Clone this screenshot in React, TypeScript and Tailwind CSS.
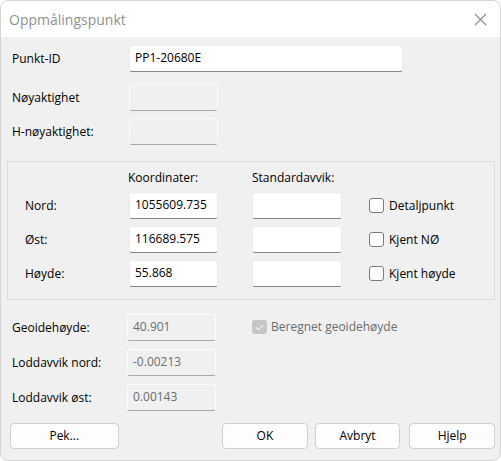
import React from 'react';

const font = { fontFamily: '"Segoe UI", "Open Sans", "Noto Sans", sans-serif' };

function Field({ value = '', width = 'w-[89px]', disabled = false }: { value?: string; width?: string; disabled?: boolean }) {
  return (
    <div
      className={`${width} h-[27px] shrink-0 rounded-[3px] border px-[5px] pt-[3px] text-[12px] leading-[18px] ${
        disabled
          ? 'bg-[#f0f0f0] border-[#fbfbfb] border-b-[#a8a8a8] text-[#6d6d6d]'
          : 'bg-white border-[#ececec] border-b-[#868686] text-black'
      }`}
    >
      {value}
    </div>
  );
}

function Check({ label }: { label: string }) {
  return (
    <div className="flex items-center gap-[5px]">
      <div className="w-[15px] h-[15px] rounded-[3px] border border-[#7a7a7a] bg-white" />
      <span className="text-[12px] text-black">{label}</span>
    </div>
  );
}

function Button({ label, width }: { label: string; width: string }) {
  return (
    <button className={`${width} h-[26px] rounded-[4px] border border-[#d0d0d0] bg-[#fdfdfd] text-[12px] text-black`}>
      {label}
    </button>
  );
}

export default function App() {
  const rows = [
    { label: 'Nord:', value: '1055609.735', check: 'Detaljpunkt' },
    { label: 'Øst:', value: '116689.575', check: 'Kjent NØ' },
    { label: 'Høyde:', value: '55.868', check: 'Kjent høyde' },
  ];
  const lower = [
    { label: 'Geoidehøyde:', value: '40.901' },
    { label: 'Loddavvik nord:', value: '-0.00213' },
    { label: 'Loddavvik øst:', value: '0.00143' },
  ];

  return (
    <div className="w-[501px] h-[461px] bg-white" style={font}>
      <div className="w-full h-full flex flex-col rounded-[8px] overflow-hidden border border-[#d4d4d4] bg-[#f0f0f0]">
        {/* title bar */}
        <div className="h-[36px] shrink-0 bg-white flex items-center justify-between pl-[8px] pr-[12px]">
          <span className="text-[14px] text-[#8f8f8f]">Oppmålingspunkt</span>
          <svg width="13" height="13" viewBox="0 0 13 13" className="mr-[1px]">
            <path d="M1 1 L12 12 M12 1 L1 12" stroke="#8a8a8a" strokeWidth="1.1" />
          </svg>
        </div>

        <div className="flex flex-col pl-[11px] pr-[5px]">
          <div className="flex items-center mt-[8px]">
            <span className="w-[117px] text-[12px] text-black">Punkt-ID</span>
            <Field value="PP1-20680E" width="w-[274px]" />
          </div>
          <div className="flex items-center mt-[12px]">
            <span className="w-[117px] text-[12px] text-black">Nøyaktighet</span>
            <Field disabled />
          </div>
          <div className="flex items-center mt-[7px]">
            <span className="w-[117px] text-[12px] text-black">H-nøyaktighet:</span>
            <Field disabled />
          </div>

          {/* group box */}
          <div className="mt-[16px] -ml-[5px] w-[488px] h-[139px] border border-[#dcdcdc] flex flex-col pl-[17px]">
            <div className="flex mt-[7px] h-[18px] text-[12px] text-black leading-[18px]">
              <span className="ml-[103px] w-[124px]">Koordinater:</span>
              <span>Standardavvik:</span>
            </div>
            {rows.map((r, i) => (
              <div key={r.label} className={`flex items-center ${i === 0 ? 'mt-[5px]' : 'mt-[7px]'}`}>
                <span className="w-[104px] text-[12px] text-black">{r.label}</span>
                <Field value={r.value} />
                <div className="w-[34px]" />
                <Field width="w-[90px]" />
                <div className="w-[27px]" />
                <Check label={r.check} />
              </div>
            ))}
          </div>

          {lower.map((r, i) => (
            <div key={r.label} className={`flex items-center ${i === 0 ? 'mt-[14px]' : 'mt-[8px]'}`}>
              <span className="w-[115px] text-[12px] text-black">{r.label}</span>
              <Field value={r.value} disabled />
              {i === 0 && (
                <div className="flex items-center gap-[4px] ml-[36px] -mt-[1px]">
                  <div className="w-[15px] h-[14px] rounded-[3px] bg-[#c6c6c6] flex items-center justify-center">
                    <svg width="9" height="7" viewBox="0 0 9 7">
                      <path d="M1 3.5 L3.4 5.8 L8 1.2" stroke="#f4f4f4" strokeWidth="1.1" fill="none" />
                    </svg>
                  </div>
                  <span className="text-[12px] text-[#6d6d6d]">Beregnet geoidehøyde</span>
                </div>
              )}
            </div>
          ))}

          <div className="flex items-center mt-[12px] -ml-[2px]">
            <Button label="Pek..." width="w-[109px]" />
            <div className="w-[104px]" />
            <Button label="OK" width="w-[86px]" />
            <div className="w-[7px]" />
            <Button label="Avbryt" width="w-[86px]" />
            <div className="w-[9px]" />
            <Button label="Hjelp" width="w-[86px]" />
          </div>
        </div>
      </div>
    </div>
  );
}
